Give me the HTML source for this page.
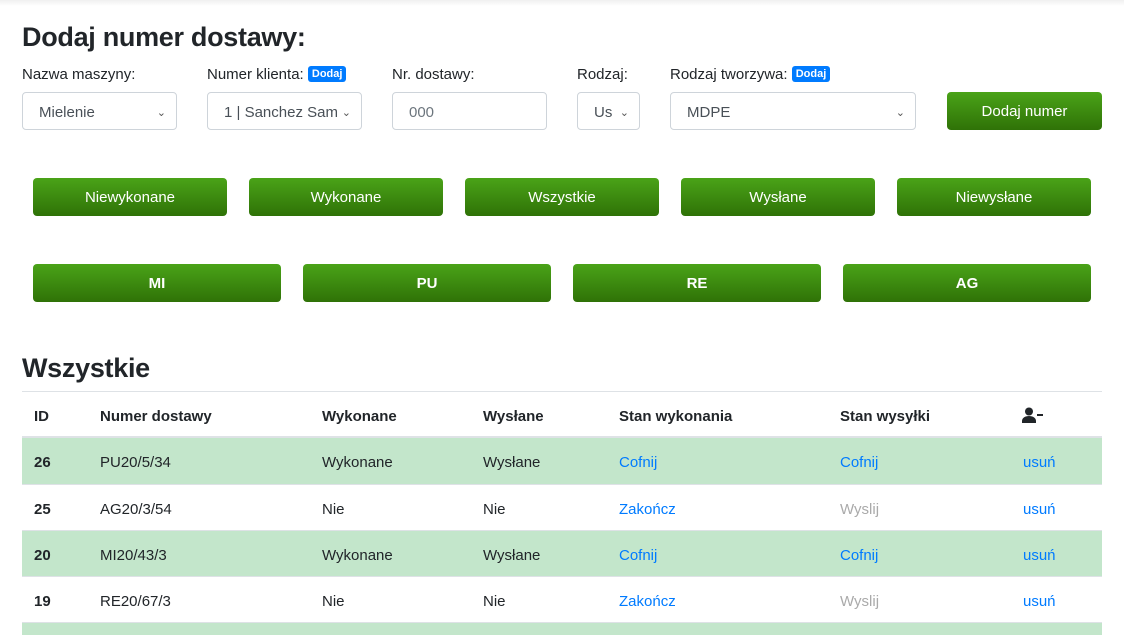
<!DOCTYPE html>
<html><head><meta charset="utf-8"><style>
*{box-sizing:border-box;margin:0;padding:0}
html,body{width:1124px;height:635px;overflow:hidden}
body{background:#fff;font-family:"Liberation Sans",sans-serif;color:#212529;position:relative}
.a{position:absolute;white-space:nowrap}
.h{font-size:27px;font-weight:bold;letter-spacing:-0.3px}
.l{font-size:15px}
.badge{display:inline-block;background:#007bff;color:#fff;font-size:11px;font-weight:bold;padding:2px 4px;border-radius:3px;vertical-align:2px}
.in{position:absolute;height:38px;border:1px solid #ced4da;border-radius:4px;font-size:15px;color:#495057;padding:0 16px;line-height:40px;background:#fff;overflow:hidden;white-space:nowrap}
.in .c{position:absolute;right:10px;top:0;font-size:11px;color:#555}
.b{position:absolute;height:38px;border-radius:4px;background:linear-gradient(#4aa318,#2f7207);color:#fff;font-size:15px;text-align:center;line-height:40px}
.bb{font-weight:bold}
.row{position:absolute;left:22px;width:1080px;height:46px;font-size:15px;border-top:1px solid #dee2e6}
.row span{position:absolute;top:16px}
.g{background:#c3e6cb}
.lnk{color:#007bff}
.gr{color:#aaa}
</style></head><body>
<div class="a" style="left:0;top:0;width:1124px;height:6px;background:linear-gradient(#f0f0f0,#fff)"></div>
<div class="a h" style="left:22px;top:22px">Dodaj numer dostawy:</div>
<div class="a l" style="left:22px;top:66px">Nazwa maszyny:</div>
<div class="a l" style="left:207px;top:66px">Numer klienta: <span class="badge">Dodaj</span></div>
<div class="a l" style="left:392px;top:66px">Nr. dostawy:</div>
<div class="a l" style="left:577px;top:66px">Rodzaj:</div>
<div class="a l" style="left:670px;top:66px">Rodzaj tworzywa: <span class="badge">Dodaj</span></div>
<div class="in" style="left:22px;top:92px;width:155px">Mielenie<span class="c">&#8964;</span></div>
<div class="in" style="left:207px;top:92px;width:155px;padding-right:30px">1 | Sanchez Sam<span class="c" style="background:#fff;padding-left:4px">&#8964;</span></div>
<div class="in" style="left:392px;top:92px;width:155px;color:#6c757d">000</div>
<div class="in" style="left:577px;top:92px;width:63px">Us<span class="c">&#8964;</span></div>
<div class="in" style="left:670px;top:92px;width:246px">MDPE<span class="c">&#8964;</span></div>
<div class="b" style="left:947px;top:92px;width:155px">Dodaj numer</div>
<div class="b" style="left:33px;top:178px;width:194px">Niewykonane</div>
<div class="b" style="left:249px;top:178px;width:194px">Wykonane</div>
<div class="b" style="left:465px;top:178px;width:194px">Wszystkie</div>
<div class="b" style="left:681px;top:178px;width:194px">Wysłane</div>
<div class="b" style="left:897px;top:178px;width:194px">Niewysłane</div>
<div class="b bb" style="left:33px;top:264px;width:248px">MI</div>
<div class="b bb" style="left:303px;top:264px;width:248px">PU</div>
<div class="b bb" style="left:573px;top:264px;width:248px">RE</div>
<div class="b bb" style="left:843px;top:264px;width:248px">AG</div>
<div class="a h" style="left:22px;top:353px">Wszystkie</div>
<div class="a" style="left:22px;top:391px;width:1080px;height:1px;background:#dee2e6"></div>
<div class="row" style="top:392px;border:none;font-weight:bold">
<span style="left:12px">ID</span><span style="left:78px">Numer dostawy</span><span style="left:300px">Wykonane</span><span style="left:461px">Wysłane</span><span style="left:597px">Stan wykonania</span><span style="left:818px">Stan wysyłki</span>
<span style="left:1000px;top:15px"><svg width="22" height="16" viewBox="0 0 22 16"><circle cx="7" cy="4.5" r="4" fill="#212529"/><path d="M0 16v-2c0-3 3-5 7-5s7 2 7 5v2z" fill="#212529"/><rect x="15" y="7" width="6" height="2" fill="#212529"/></svg></span></div>
<div class="a" style="left:22px;top:436px;width:1080px;height:2px;background:#dee2e6"></div>
<div class="row g" style="top:438px;border:none"><span style="left:12px;font-weight:bold">26</span><span style="left:78px">PU20/5/34</span><span style="left:300px">Wykonane</span><span style="left:461px">Wysłane</span><span style="left:597px" class="lnk">Cofnij</span><span style="left:818px" class="lnk">Cofnij</span><span style="left:1001px" class="lnk">usuń</span></div>
<div class="row" style="top:484px"><span style="left:12px;font-weight:bold">25</span><span style="left:78px">AG20/3/54</span><span style="left:300px">Nie</span><span style="left:461px">Nie</span><span style="left:597px" class="lnk">Zakończ</span><span style="left:818px" class="gr">Wyslij</span><span style="left:1001px" class="lnk">usuń</span></div>
<div class="row g" style="top:530px"><span style="left:12px;font-weight:bold">20</span><span style="left:78px">MI20/43/3</span><span style="left:300px">Wykonane</span><span style="left:461px">Wysłane</span><span style="left:597px" class="lnk">Cofnij</span><span style="left:818px" class="lnk">Cofnij</span><span style="left:1001px" class="lnk">usuń</span></div>
<div class="row" style="top:576px"><span style="left:12px;font-weight:bold">19</span><span style="left:78px">RE20/67/3</span><span style="left:300px">Nie</span><span style="left:461px">Nie</span><span style="left:597px" class="lnk">Zakończ</span><span style="left:818px" class="gr">Wyslij</span><span style="left:1001px" class="lnk">usuń</span></div>
<div class="row g" style="top:622px;height:13px"></div>
</body></html>
